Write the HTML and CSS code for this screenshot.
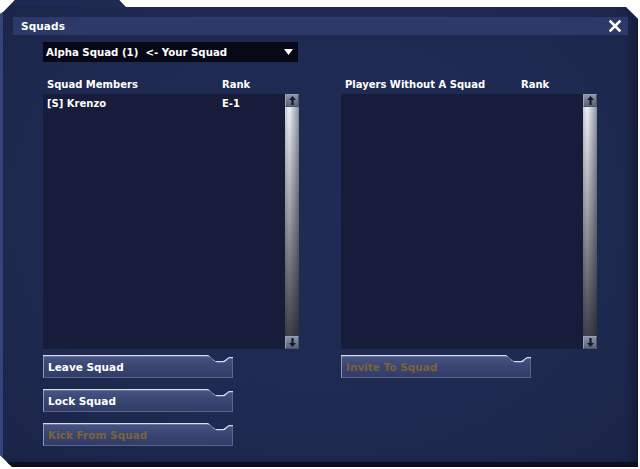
FILE: index.html
```html
<!DOCTYPE html>
<html>
<head>
<meta charset="utf-8">
<link rel="stylesheet" href="styles.css">
</head>
<body>
<div class="window">
  <div class="titlebar">
    <span class="title">Squads</span>
    <svg class="close" width="12" height="12" viewBox="0 0 12 12"><path d="M1.5 1.5 L10.5 10.5 M10.5 1.5 L1.5 10.5" stroke="#fff" stroke-width="2.6" stroke-linecap="square"/></svg>
  </div>
  <div class="content">
    <div class="dropdown">
      <span>Alpha Squad (1)&nbsp;&nbsp;&lt;- Your Squad</span>
      <svg width="9" height="6" viewBox="0 0 9 6"><path d="M0 0 H9 L4.5 6 Z" fill="#fff"/></svg>
    </div>
    <div class="spacer"></div>

    <div class="header"><span class="c1">Squad Members</span><span class="c2">Rank</span></div>
    <div class="header"><span class="c1">Players Without A Squad</span><span class="c2 r">Rank</span></div>

    <div class="list">
      <div class="rows">
        <div class="row"><span class="c1">[S] Krenzo</span><span class="c2">E-1</span></div>
      </div>
      <div class="scroll">
        <div class="sbtn"><svg width="7" height="9" viewBox="0 0 7 9"><path d="M3.5 0 L7 4 H4.6 V9 H2.4 V4 H0 Z" fill="#141a30"/></svg></div>
        <div class="track"></div>
        <div class="sbtn"><svg width="7" height="9" viewBox="0 0 7 9"><path d="M3.5 9 L7 5 H4.6 V0 H2.4 V5 H0 Z" fill="#141a30"/></svg></div>
      </div>
    </div>
    <div class="list">
      <div class="rows"></div>
      <div class="scroll">
        <div class="sbtn"><svg width="7" height="9" viewBox="0 0 7 9"><path d="M3.5 0 L7 4 H4.6 V9 H2.4 V4 H0 Z" fill="#141a30"/></svg></div>
        <div class="track"></div>
        <div class="sbtn"><svg width="7" height="9" viewBox="0 0 7 9"><path d="M3.5 9 L7 5 H4.6 V0 H2.4 V5 H0 Z" fill="#141a30"/></svg></div>
      </div>
    </div>

    <div class="buttons">
      <div class="btn"><span>Leave Squad</span><svg class="edge" width="190" height="23" viewBox="0 0 190 23"><path d="M0 0.5 H164 Q168 0.5 171 5 L174 6.5 H180 Q182 6.5 184 4 L186 2.5 H190" fill="none" stroke="#d5dbea" stroke-width="1.4"/></svg></div>
      <div class="btn"><span>Lock Squad</span><svg class="edge" width="190" height="23" viewBox="0 0 190 23"><path d="M0 0.5 H164 Q168 0.5 171 5 L174 6.5 H180 Q182 6.5 184 4 L186 2.5 H190" fill="none" stroke="#d5dbea" stroke-width="1.4"/></svg></div>
      <div class="btn disabled"><span>Kick From Squad</span><svg class="edge" width="190" height="23" viewBox="0 0 190 23"><path d="M0 0.5 H164 Q168 0.5 171 5 L174 6.5 H180 Q182 6.5 184 4 L186 2.5 H190" fill="none" stroke="#d5dbea" stroke-width="1.4"/></svg></div>
    </div>
    <div class="buttons">
      <div class="btn disabled"><span>Invite To Squad</span><svg class="edge" width="190" height="23" viewBox="0 0 190 23"><path d="M0 0.5 H164 Q168 0.5 171 5 L174 6.5 H180 Q182 6.5 184 4 L186 2.5 H190" fill="none" stroke="#d5dbea" stroke-width="1.4"/></svg></div>
    </div>
  </div>
</div>
</body>
</html>
```
FILE: styles.css
```css
html, body {
  margin: 0;
  padding: 0;
  background: #ffffff;
}
body {
  width: 640px;
  height: 469px;
  overflow: hidden;
  font-family: "DejaVu Sans", Verdana, sans-serif;
  font-weight: bold;
  font-size: 10px;
  color: #ffffff;
}
.window {
  width: 638px;
  height: 467px;
  box-sizing: border-box;
  padding-top: 17px;
  background:
    radial-gradient(ellipse at 50% 45%, #202b55 0%, #1f2a52 60%, #1a2447 100%);
  clip-path: polygon(3px 12px, 15px 0, 119px 0, 126px 7px, 626px 7px, 638px 19px, 638px 467px, 12px 467px, 0 455px, 0 14px);
  box-shadow: inset 3px 0 0 #34437a, inset 0 -3px 0 #0c1022, inset -6px 0 8px #141c3a, inset 0 8px 6px -4px #2a3668;
  border-bottom: 2px solid #0a0d1a;
}
.titlebar {
  margin: 0 10px 0 13px;
  height: 18px;
  background: #2c3969;
  display: flex;
  align-items: center;
  justify-content: space-between;
  padding: 0 7px 0 8px;
}
.title {
  font-size: 10.5px;
  letter-spacing: 0.1px;
}
.close {
  display: block;
}
.content {
  display: grid;
  grid-template-columns: 256px 256px;
  column-gap: 42px;
  padding-left: 43px;
}
.dropdown {
  margin-top: 7px;
  width: 255px;
  height: 20px;
  box-sizing: border-box;
  background: #070a16;
  display: flex;
  align-items: center;
  justify-content: space-between;
  padding: 0 5px 0 3px;
  font-size: 10.2px;
}
.header {
  height: 32px;
  display: flex;
  align-items: flex-end;
  padding-bottom: 3px;
  box-sizing: border-box;
  line-height: 12px;
}
.c1 {
  padding-left: 4px;
  width: 175px;
  flex: none;
}
.c2 {
  flex: none;
}
.c2.r {
  padding-left: 1px;
}
.list {
  height: 255px;
  display: flex;
  background: #161c39;
  width: 256px;
}
.rows {
  flex: 1;
  padding-top: 2px;
}
.row {
  display: flex;
  height: 14px;
  align-items: center;
}
.scroll {
  width: 14px;
  display: flex;
  flex-direction: column;
  background: #2b2f3f;
}
.sbtn {
  height: 13px;
  box-sizing: border-box;
  border: 1px solid #9aa0b4;
  border-right-color: #4f5568;
  border-bottom-color: #4f5568;
  background: linear-gradient(#8d93a6, #5c6277);
  display: flex;
  align-items: center;
  justify-content: center;
}
.track {
  flex: 1;
  background: linear-gradient(90deg, #c9ccd6 0%, #eef0f4 30%, #b9bcc7 70%, #8a8e9c 100%);
  position: relative;
}
.track::after {
  content: "";
  position: absolute;
  inset: 0;
  background: linear-gradient(rgba(0,0,0,0) 0%, rgba(20,22,32,0.35) 45%, rgba(20,22,32,0.8) 100%);
}
.buttons {
  padding-top: 6px;
  display: flex;
  flex-direction: column;
  gap: 11px;
}
.btn {
  position: relative;
  width: 190px;
  height: 23px;
  box-sizing: border-box;
  background: linear-gradient(#4a5683 0%, #3b4774 45%, #313c67 100%);
  border-left: 1px solid #8d97b8;
  border-bottom: 1px solid #5a658d;
  border-right: 1px solid #5a658d;
  clip-path: polygon(0 0, 165px 0, 172px 6px, 180px 6px, 186px 2px, 190px 2px, 190px 23px, 0 23px);
  display: flex;
  align-items: center;
  padding: 1px 0 0 4px;
  font-size: 10.5px;
}
.btn.disabled {
  color: #7d6239;
}
.edge {
  position: absolute;
  left: -1px;
  top: 0;
}
```
